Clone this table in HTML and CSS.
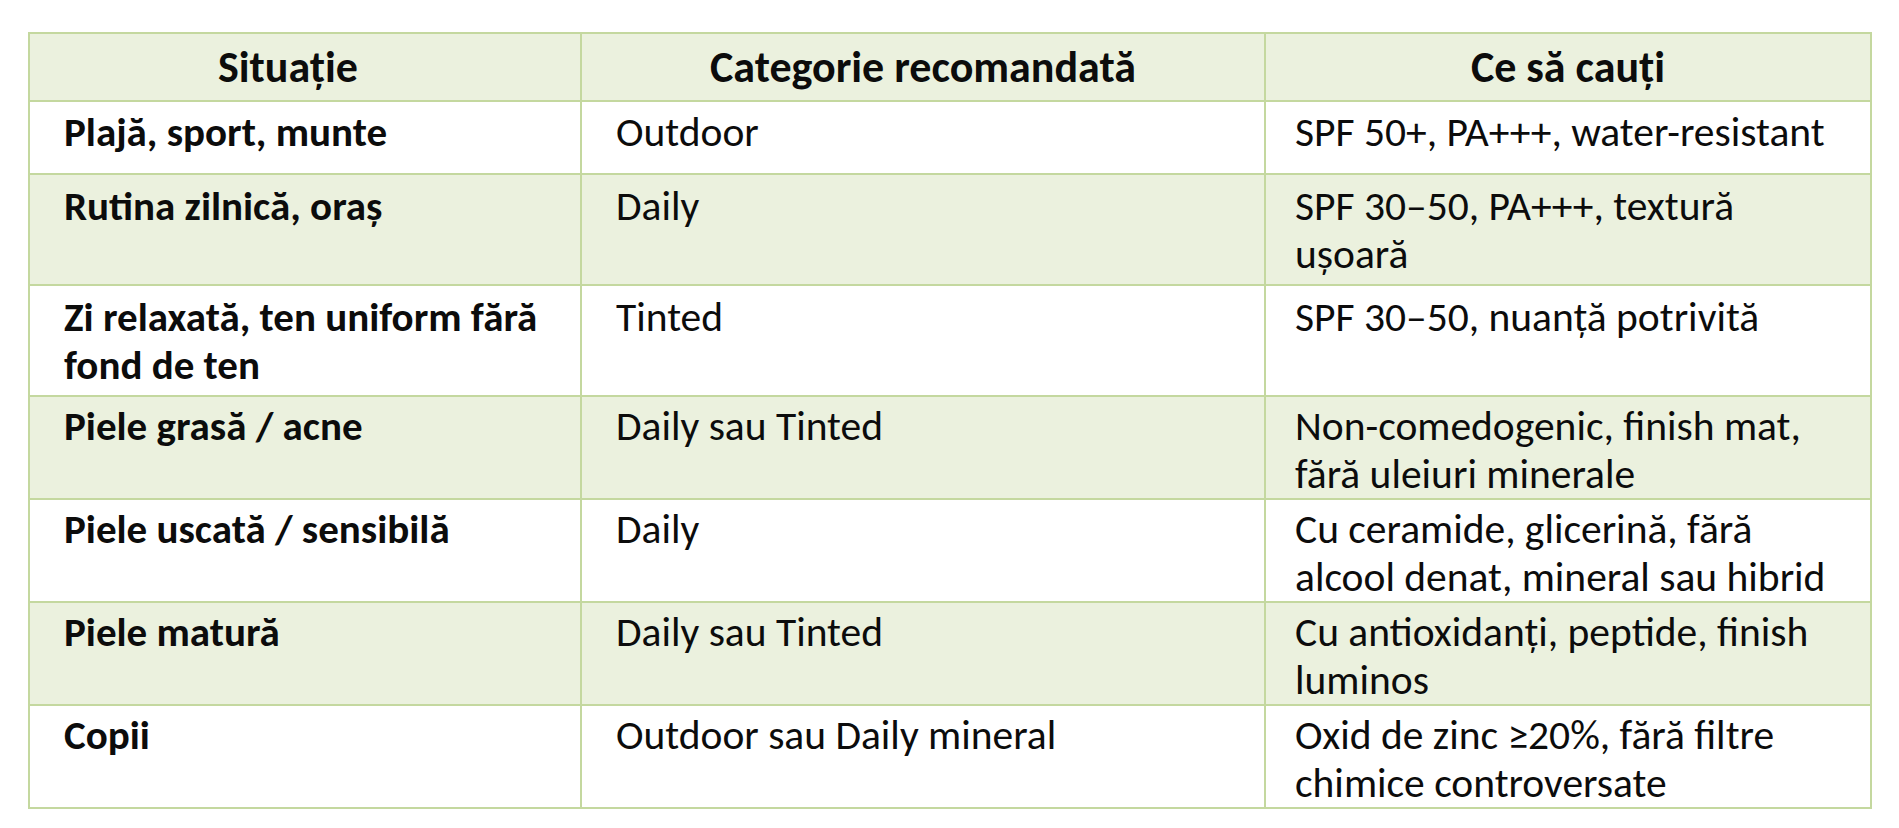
FILE: index.html
```html
<!DOCTYPE html>
<html lang="ro">
<head>
<meta charset="utf-8">
<title>Protecție solară</title>
<link rel="stylesheet" href="styles.css">
</head>
<body>
<table class="guide">
  <colgroup>
    <col class="c1">
    <col class="c2">
    <col class="c3">
  </colgroup>
  <thead>
    <tr class="head">
      <th class="first">Situație</th>
      <th>Categorie recomandată</th>
      <th>Ce să cauți</th>
    </tr>
  </thead>
  <tbody>
    <tr class="r-one">
      <td>Plajă, sport, munte</td>
      <td>Outdoor</td>
      <td>SPF 50+, PA+++, water-resistant</td>
    </tr>
    <tr class="r-tall shaded">
      <td>Rutina zilnică, oraş</td>
      <td>Daily</td>
      <td>SPF 30–50, PA+++, textură<br>uşoară</td>
    </tr>
    <tr class="r-tall">
      <td>Zi relaxată, ten uniform fără<br>fond de ten</td>
      <td>Tinted</td>
      <td>SPF 30–50, nuanță potrivită</td>
    </tr>
    <tr class="r-two shaded">
      <td>Piele grasă / acne</td>
      <td>Daily sau Tinted</td>
      <td>Non-comedogenic, finish mat,<br>fără uleiuri minerale</td>
    </tr>
    <tr class="r-two">
      <td>Piele uscată / sensibilă</td>
      <td>Daily</td>
      <td>Cu ceramide, glicerină, fără<br>alcool denat, mineral sau hibrid</td>
    </tr>
    <tr class="r-two shaded">
      <td>Piele matură</td>
      <td>Daily sau Tinted</td>
      <td>Cu antioxidanți, peptide, finish<br>luminos</td>
    </tr>
    <tr class="r-two">
      <td>Copii</td>
      <td>Outdoor sau Daily mineral</td>
      <td>Oxid de zinc ≥20%, fără filtre<br>chimice controversate</td>
    </tr>
  </tbody>
</table>
</body>
</html>
```
FILE: styles.css
```css
html, body {
  margin: 0;
  padding: 0;
  background: #ffffff;
}

body {
  font-family: Carlito, Calibri, Lato, "Liberation Sans", sans-serif;
  font-size: 41.5px;
  color: #0c0c0c;
}

.guide {
  margin: 32px 0 0 28px;
  width: 1842px;
  table-layout: fixed;
  border-collapse: collapse;
  border: 2px solid #c4d89f;
}

.guide .c1 { width: 552px; }
.guide .c2 { width: 684px; }
.guide .c3 { width: 606px; }

.guide th,
.guide td {
  border: 2px solid #c4d89f;
  vertical-align: top;
  line-height: 48px;
  padding: 5px 10px 0 34px;
  white-space: nowrap;
  text-align: left;
}

.guide td:nth-child(1) {
  font-weight: 700;
  font-size: 41px;
}

.guide td:nth-child(3) {
  padding-left: 29px;
}

.guide th {
  font-weight: 700;
  font-size: 44px;
  text-align: center;
  padding: 9px 10px 0 10px;
}

.guide th.first {
  padding-right: 44px;
}

.head {
  height: 68px;
  background: #ebf1de;
}

.shaded {
  background: #ebf1de;
}

.r-one {
  height: 73px;
}

.r-one td {
  padding-top: 6px;
}

.r-tall {
  height: 111px;
}

.r-tall td {
  padding-top: 7px;
}

.r-two {
  height: 103px;
}
```
